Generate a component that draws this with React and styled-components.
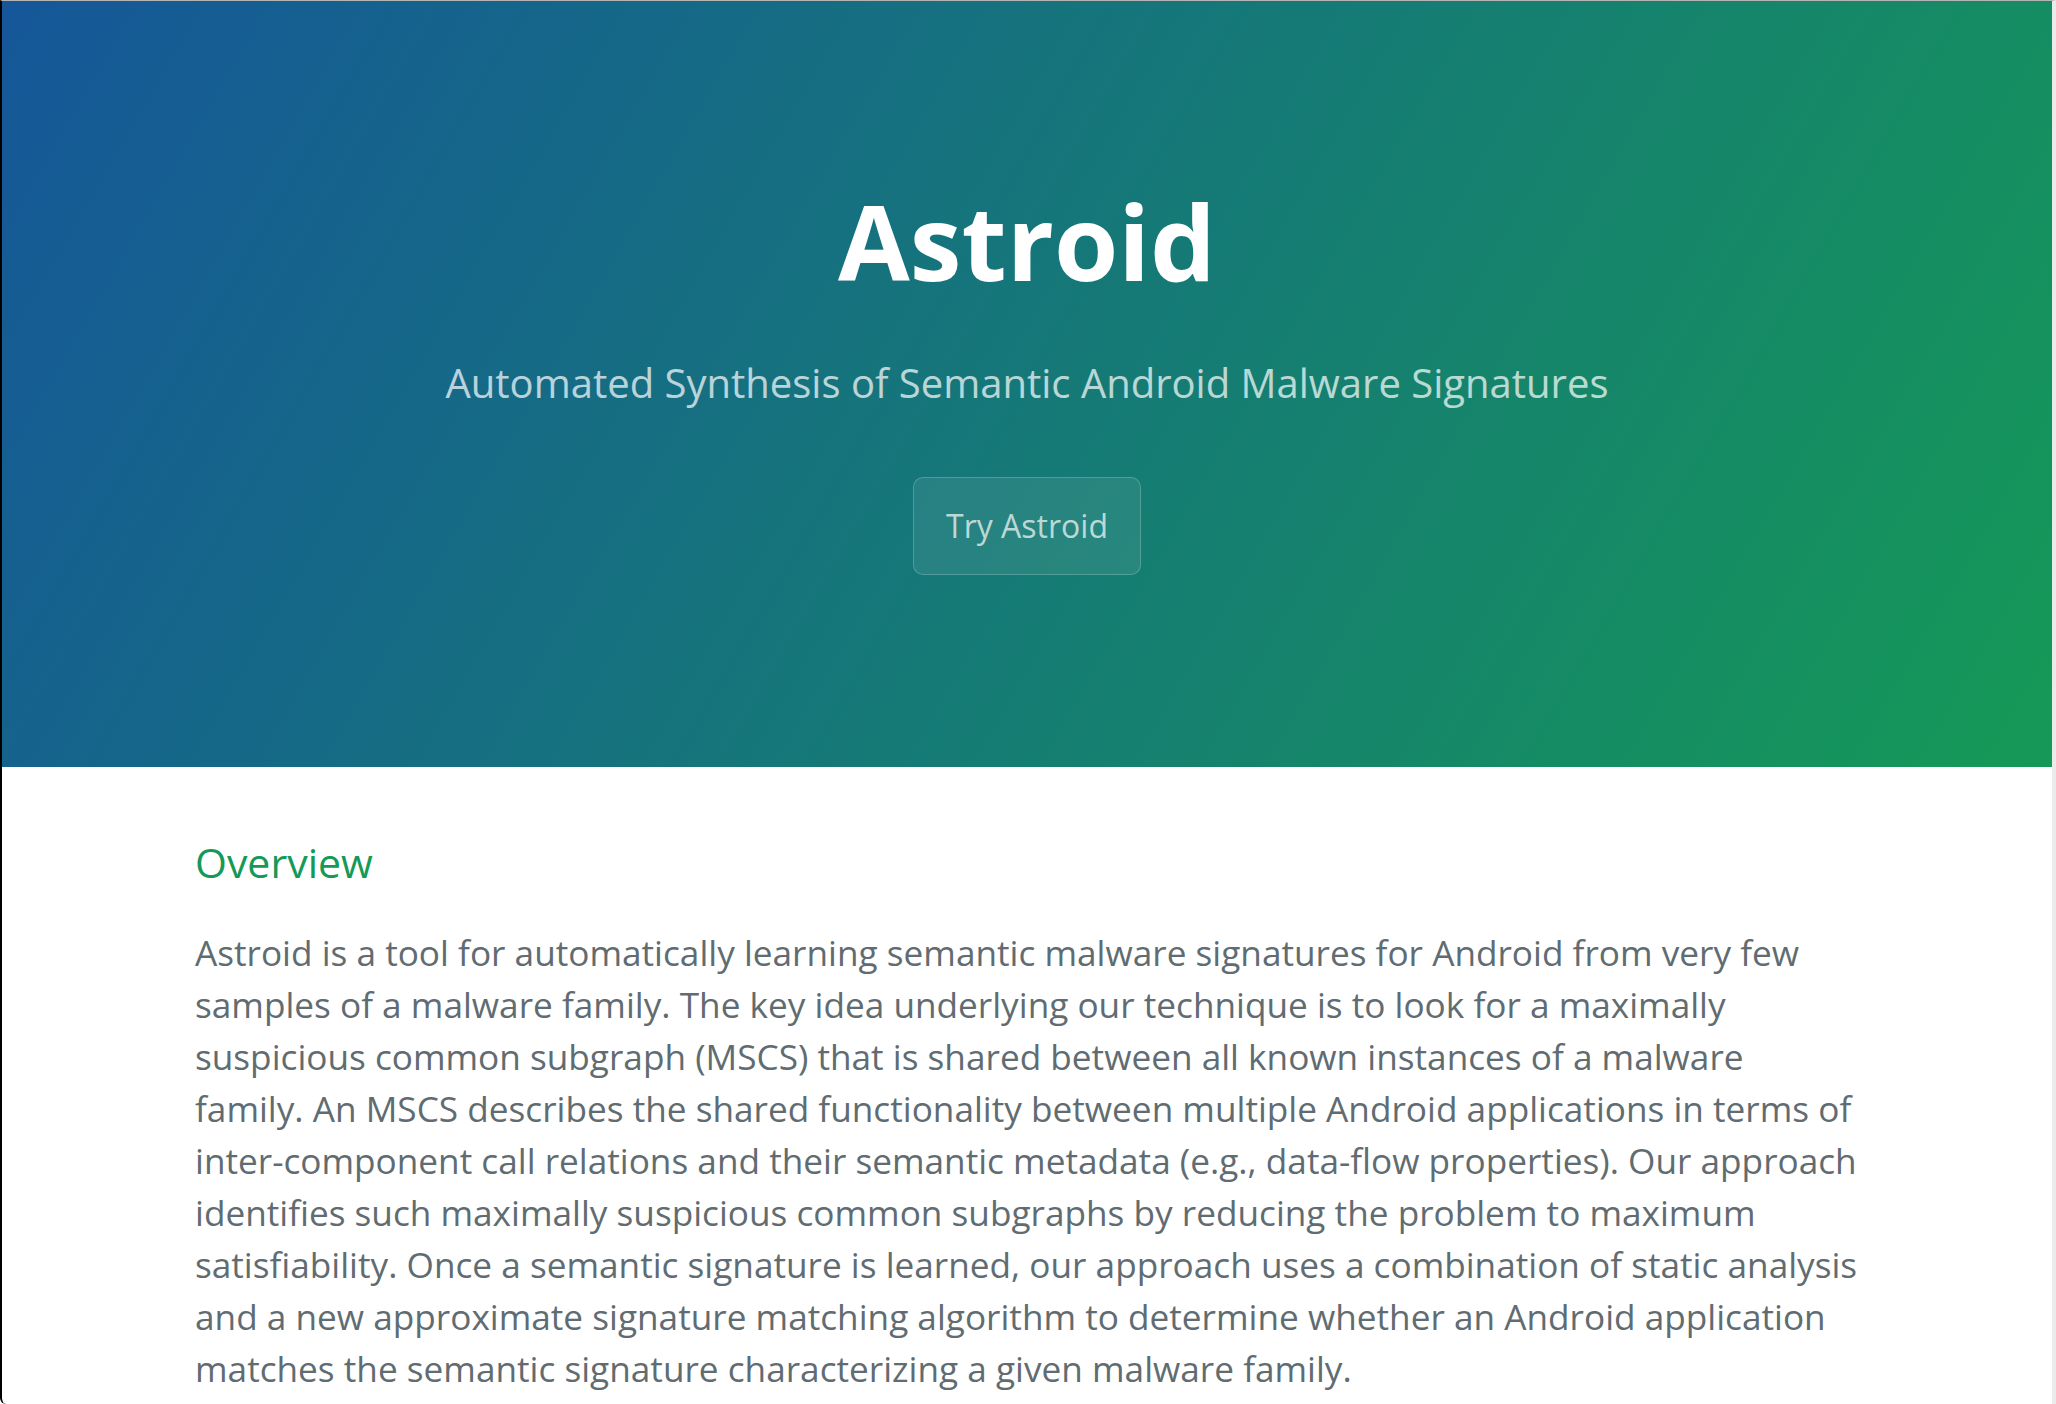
import React from "react";
import styled, { createGlobalStyle } from "styled-components";

const GlobalStyle = createGlobalStyle`
  html, body {
    margin: 0;
    padding: 0;
    background: #fff;
  }
  body {
    font-family: "Open Sans", "Helvetica Neue", Helvetica, Arial, sans-serif;
    color: #606c71;
    overflow: hidden;
  }
  * {
    box-sizing: border-box;
  }
`;

const Frame = styled.div`
  height: 1404px;
  border-left: 2px solid #000;
  border-top: 1px solid #b4b4b4;
  border-right: 4px solid #ebebeb;
  border-bottom-left-radius: 6px;
  overflow: hidden;
`;

const PageHeader = styled.section`
  color: #fff;
  text-align: center;
  background-color: #159957;
  background-image: linear-gradient(120deg, #155799, #159957);
  padding: 162px 192px 192px;
`;

const ProjectName = styled.h1`
  margin: 0 0 34px;
  font-size: 104px;
  font-weight: 700;
  line-height: 156px;
`;

const Tagline = styled.h2`
  margin: 0 0 64px;
  font-size: 40px;
  font-weight: 400;
  line-height: 60px;
  opacity: 0.7;
`;

const Button = styled.a`
  display: inline-block;
  padding: 24px 32px;
  font-size: 32px;
  line-height: 48px;
  color: rgba(255, 255, 255, 0.7);
  background-color: rgba(255, 255, 255, 0.08);
  border: 1px solid rgba(255, 255, 255, 0.2);
  border-radius: 10px;
  text-decoration: none;
`;

const MainContent = styled.section`
  max-width: 2048px;
  margin: 0 auto;
  padding: 64px 192px;
  font-size: 35.2px;
  line-height: 52px;
  word-wrap: break-word;
`;

const SectionTitle = styled.h2`
  margin: 0 0 32px;
  font-size: 41px;
  font-weight: 400;
  line-height: 63px;
  color: #159957;
`;

const Paragraph = styled.p`
  margin: 0 0 32px;
`;

export default function App() {
  return (
    <>
      <GlobalStyle />
      <Frame>
        <PageHeader>
          <ProjectName>Astroid</ProjectName>
          <Tagline>Automated Synthesis of Semantic Android Malware Signatures</Tagline>
          <Button href="#">Try Astroid</Button>
        </PageHeader>
        <MainContent>
          <SectionTitle>Overview</SectionTitle>
          <Paragraph>
            Astroid is a tool for automatically learning semantic malware signatures for
            Android from very few samples of a malware family. The key idea underlying our
            technique is to look for a maximally suspicious common subgraph (MSCS) that is
            shared between all known instances of a malware family. An MSCS describes the
            shared functionality between multiple Android applications in terms of
            inter-component call relations and their semantic metadata (e.g., data-flow
            properties). Our approach identifies such maximally suspicious common subgraphs
            by reducing the problem to maximum satisfiability. Once a semantic signature is
            learned, our approach uses a combination of static analysis and a new
            approximate signature matching algorithm to determine whether an Android
            application matches the semantic signature characterizing a given malware
            family.
          </Paragraph>
        </MainContent>
      </Frame>
    </>
  );
}
